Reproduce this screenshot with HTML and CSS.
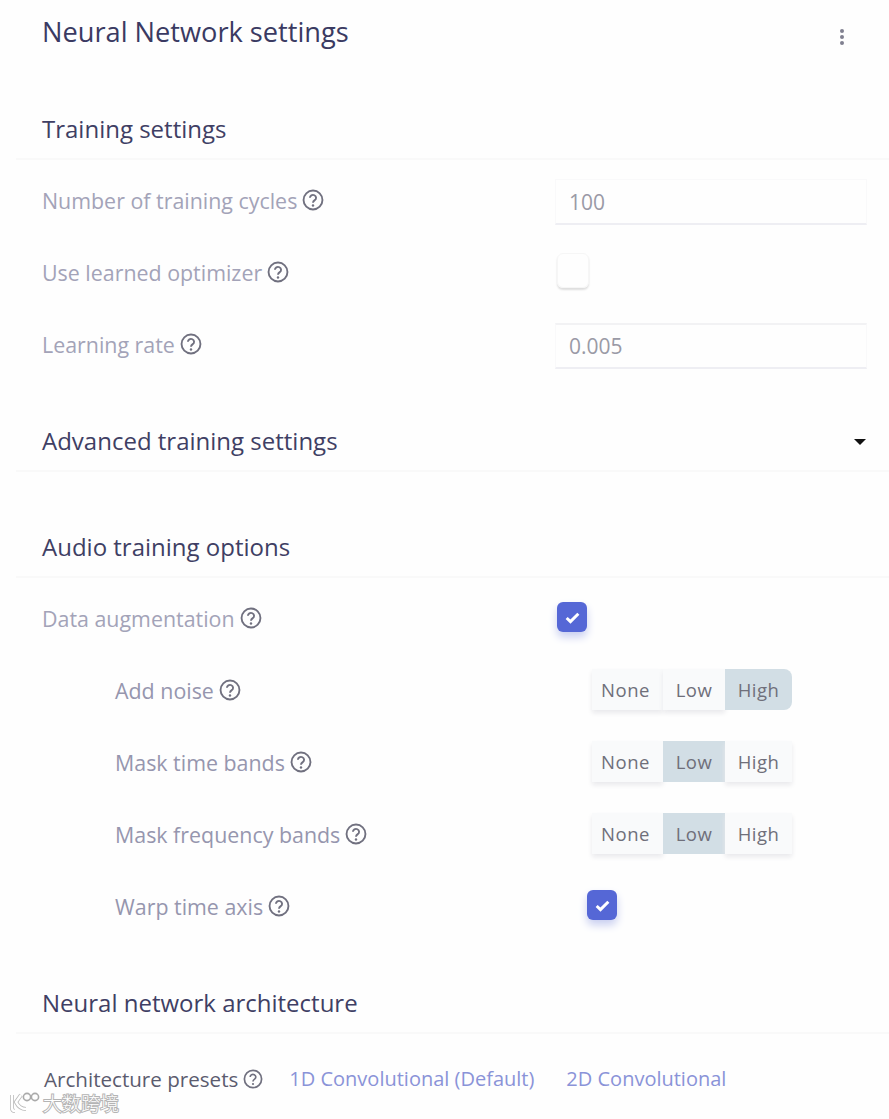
FILE: index.html
```html
<!DOCTYPE html>
<html lang="en">
<head>
  <meta charset="UTF-8">
  <meta name="viewport" content="width=device-width, initial-scale=1.0">
  <title>Neural Network settings</title>
  <link rel="stylesheet" href="styles.css">
</head>
<body>

  <svg width="0" height="0" class="defs">
    <symbol id="help" viewBox="0 0 20 20">
      <circle cx="10" cy="10" r="8.6" fill="none" stroke="currentColor" stroke-width="1.7"/>
      <path d="M7.2 8a2.8 2.6 0 1 1 4.4 2.1c-1 .7-1.6 1.2-1.6 2.3" fill="none" stroke="currentColor" stroke-width="1.7"/>
      <circle cx="10" cy="15" r="1.1" fill="currentColor"/>
    </symbol>
    <symbol id="check" viewBox="0 0 16 16">
      <path d="M2.5 8.5l3.6 3.4 7.4-7.4" fill="none" stroke="currentColor" stroke-width="2.8"/>
    </symbol>
  </svg>

  <!-- Title -->
  <header class="page-title">
    <h1>Neural Network settings</h1>
    <span class="menu-dots"><i></i><i></i><i></i></span>
  </header>

  <!-- Training settings -->
  <section class="block">
    <h2 class="block-head">Training settings</h2>
    <div class="row">
      <label>Number of training cycles <svg class="help"><use href="#help"/></svg></label>
      <div class="field">100</div>
    </div>
    <div class="row">
      <label>Use learned optimizer <svg class="help"><use href="#help"/></svg></label>
      <span class="checkbox"></span>
    </div>
    <div class="row">
      <label>Learning rate <svg class="help"><use href="#help"/></svg></label>
      <div class="field field-top">0.005</div>
    </div>
  </section>

  <!-- Advanced -->
  <section class="block block-advanced">
    <h2 class="block-head">Advanced training settings <span class="caret"></span></h2>
  </section>

  <!-- Audio options -->
  <section class="block block-audio">
    <h2 class="block-head">Audio training options</h2>
    <div class="row">
      <label>Data augmentation <svg class="help"><use href="#help"/></svg></label>
      <span class="checkbox checked"><svg><use href="#check"/></svg></span>
    </div>
    <div class="row sub">
      <label>Add noise <svg class="help"><use href="#help"/></svg></label>
      <div class="toggle">
        <span>None</span><span>Low</span><span class="on on-end">High</span>
      </div>
    </div>
    <div class="row sub">
      <label>Mask time bands <svg class="help"><use href="#help"/></svg></label>
      <div class="toggle">
        <span>None</span><span class="on">Low</span><span>High</span>
      </div>
    </div>
    <div class="row sub">
      <label>Mask frequency bands <svg class="help"><use href="#help"/></svg></label>
      <div class="toggle">
        <span>None</span><span class="on">Low</span><span>High</span>
      </div>
    </div>
    <div class="row sub">
      <label>Warp time axis <svg class="help"><use href="#help"/></svg></label>
      <span class="checkbox checked"><svg><use href="#check"/></svg></span>
    </div>
  </section>

  <!-- Architecture -->
  <section class="block block-arch">
    <h2 class="block-head">Neural network architecture</h2>
    <div class="presets">
      <label>Architecture presets <svg class="help"><use href="#help"/></svg></label>
      <a href="#">1D Convolutional (Default)</a>
      <a href="#">2D Convolutional</a>
    </div>
  </section>

  <div class="watermark">
    <svg width="34" height="22" viewBox="0 0 34 22">
      <path d="M4 4v13c0 2 1 3 3 3M13 4L8 11c2 4 5 7 10 7" fill="none" stroke="#bbb" stroke-width="4"/>
      <path d="M4 4v13c0 2 1 3 3 3M13 4L8 11c2 4 5 7 10 7" fill="none" stroke="#fff" stroke-width="2.4"/>
      <circle cx="19" cy="6" r="3.6" fill="none" stroke="#aaa" stroke-width="1.6"/>
      <circle cx="27" cy="6" r="3.6" fill="none" stroke="#aaa" stroke-width="1.6"/>
    </svg>
    <span>大数跨境</span>
  </div>

</body>
</html>
```

FILE: styles.css
```css
/* General Styling */
* {
  margin: 0;
  padding: 0;
  box-sizing: border-box;
}

body {
  position: relative;
  height: 1119px;
  overflow: hidden;
  background-color: #fefefe;
  font-family: "Open Sans", Arial, sans-serif;
  color: #2f2f5c;
}

.defs {
  position: absolute;
}

/* Title */
.page-title {
  display: flex;
  justify-content: space-between;
  align-items: center;
  height: 64px;
  padding: 0 45px 2px 42px;
}

.page-title h1 {
  font-size: 27.2px;
  font-weight: 500;
  color: #3a3a62;
}

.menu-dots {
  display: flex;
  flex-direction: column;
  gap: 2px;
  margin-top: 12px;
}

.menu-dots i {
  width: 4px;
  height: 4px;
  border-radius: 50%;
  background-color: #808090;
}

/* Sections */
.block-head {
  display: flex;
  justify-content: space-between;
  align-items: center;
  height: 62px;
  margin: 0 0 4px 16px;
  padding: 0 23px 0 26px;
  border-bottom: 2px solid #f9f9f9;
  font-size: 24px;
  font-weight: 500;
  color: #3f3f64;
}

.block {
  padding-top: 34px;
}

.block-advanced {
  padding-top: 30px;
}

.block-audio {
  padding-top: 40px;
}

.block-arch {
  padding-top: 30px;
}

.caret {
  width: 0;
  height: 0;
  margin-top: 4px;
  border-left: 6px solid transparent;
  border-right: 6px solid transparent;
  border-top: 6px solid #111;
}

/* Form rows */
.row {
  display: grid;
  grid-template-columns: 513px 312px;
  align-items: center;
  height: 72px;
  padding-left: 42px;
}

.row.sub {
  padding-left: 115px;
  grid-template-columns: 472px 280px;
}

label {
  display: flex;
  align-items: center;
  gap: 5px;
  font-size: 21.4px;
  color: #a3a3b8;
  white-space: nowrap;
}

.row.sub label {
  color: #9696ae;
}

.help {
  width: 22px;
  height: 22px;
  color: #70707f;
}

.field {
  height: 46px;
  margin-top: 4px;
  padding: 9px 13px;
  border: 1px solid #f9f9fa;
  border-bottom: 2px solid #eeeef3;
  font-size: 21px;
  line-height: 26px;
  color: #9a9aa6;
}

.field-top {
  padding-top: 8px;
  border-top: 2px solid #f2f2f4;
}

.checkbox {
  display: flex;
  align-items: center;
  justify-content: center;
  width: 32px;
  height: 35px;
  margin: 0 0 4px 2px;
  border: 1px solid #f6f6f6;
  border-radius: 6px;
  box-shadow: 0 2px 2px #dedede;
}

.checkbox.checked {
  width: 30px;
  height: 30px;
  margin-bottom: 2px;
  border: none;
  background-color: #5567d6;
  color: #fff;
  box-shadow: 0 5px 8px #c8cef0;
}

.row.sub .checkbox {
  margin-left: 0;
}

.checkbox svg {
  width: 17px;
  height: 17px;
}

/* None / Low / High toggle */
.toggle {
  display: grid;
  grid-template-columns: 71px 62px 67px;
  height: 41px;
  margin: 0 0 2px 5px;
  font-size: 18.5px;
  font-weight: 500;
  color: #6f6f7a;
}

.toggle span {
  display: flex;
  align-items: center;
  justify-content: center;
  background-color: #f9fafb;
  box-shadow: 0 3px 5px #e9e9ec;
  letter-spacing: .5px;
}

.toggle span:first-child {
  padding-right: 4px;
}

.toggle .on {
  background-color: #d2dee5;
  box-shadow: none;
}

.toggle .on-end {
  border-radius: 0 8px 8px 0;
}

/* Architecture presets */
.presets {
  display: flex;
  align-items: center;
  height: 80px;
  padding: 2px 0 0 44px;
}

.presets label {
  margin-right: 26px;
  font-size: 20.6px;
  line-height: 1.2;
  color: #5b5b6e;
}

.presets .help {
  width: 20px;
  height: 20px;
}

.presets a {
  margin-right: 32px;
  font-size: 20px;
  font-weight: 500;
  line-height: 1.2;
  color: #8a93d8;
  text-decoration: none;
}

/* Watermark */
.watermark {
  position: absolute;
  left: 8px;
  bottom: 6px;
  display: flex;
  align-items: center;
  gap: 1px;
  font-family: "Noto Sans CJK SC", sans-serif;
  font-size: 19px;
  font-weight: 300;
  line-height: 1;
  color: #fff;
  -webkit-text-stroke: 2px #b4b4b4;
  paint-order: stroke fill;
}
```
